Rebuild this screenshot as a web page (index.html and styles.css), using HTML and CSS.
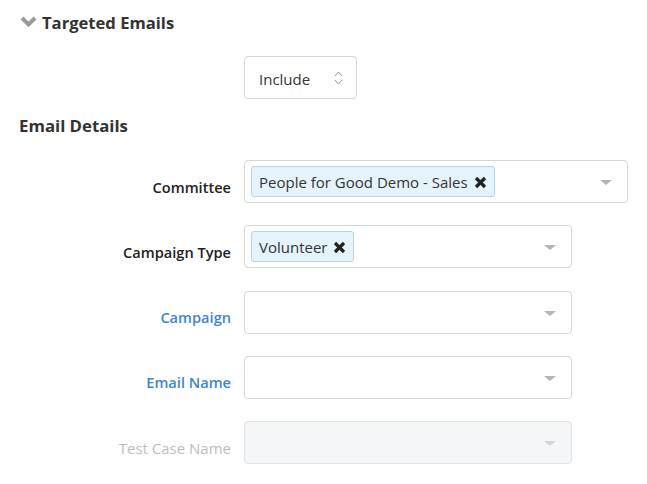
FILE: index.html
```html
<!DOCTYPE html>
<html lang="en">
<head>
    <meta charset="UTF-8">
    <title>Targeted Emails</title>
    <link rel="stylesheet" href="styles.css">
</head>
<body>
    <div class="section-title">
        <svg class="chevron" width="17" height="12" viewBox="0 0 17 12"><path d="M2 2 L8.5 8.5 L15 2" fill="none" stroke="#9a9a9a" stroke-width="4"/></svg>
        <span>Targeted Emails</span>
    </div>

    <div class="include-row">
        <div class="include-select">
            <span>Include</span>
            <svg width="9" height="16" viewBox="0 0 9 16"><path d="M1 6 L4.5 2 L8 6 M1 10 L4.5 14 L8 10" fill="none" stroke="#999" stroke-width="1"/></svg>
        </div>
    </div>

    <h2 class="group-title">Email Details</h2>

    <div class="form-row">
        <label>Committee</label>
        <div class="select wide">
            <span class="tag">People for Good Demo - Sales <svg class="remove" width="13" height="13" viewBox="0 0 13 13"><path d="M2 2 L11 11 M11 2 L2 11" stroke="#222" stroke-width="3.2"/></svg></span>
            <span class="caret"></span>
        </div>
    </div>
    <div class="form-row">
        <label>Campaign Type</label>
        <div class="select">
            <span class="tag">Volunteer <svg class="remove" width="13" height="13" viewBox="0 0 13 13"><path d="M2 2 L11 11 M11 2 L2 11" stroke="#222" stroke-width="3.2"/></svg></span>
            <span class="caret"></span>
        </div>
    </div>
    <div class="form-row">
        <label class="link">Campaign</label>
        <div class="select"><span class="caret"></span></div>
    </div>
    <div class="form-row">
        <label class="link">Email Name</label>
        <div class="select"><span class="caret"></span></div>
    </div>
    <div class="form-row disabled">
        <label>Test Case Name</label>
        <div class="select"><span class="caret"></span></div>
    </div>
</body>
</html>
```

FILE: styles.css
```css
body {
    font-family: "Open Sans", "Noto Sans", sans-serif;
    margin: 0;
    padding: 10px 19px;
    background: #fff;
    color: #333;
    font-size: 14px;
}
.section-title {
    display: flex;
    align-items: center;
    gap: 5px;
    font-size: 16.6px;
    font-weight: 700;
    color: #333;
    height: 24px;
}
.chevron {
    margin-left: 1px;
}
.include-row {
    margin: 22px 0 0 225px;
}
.include-select {
    display: flex;
    align-items: center;
    justify-content: space-between;
    width: 113px;
    height: 43px;
    box-sizing: border-box;
    padding: 2px 13px 0 14px;
    border: 1px solid #d3d6da;
    border-radius: 4px;
    font-size: 15px;
    color: #333;
}
.include-select svg {
    margin-top: -2px;
}
.group-title {
    font-size: 16.8px;
    font-weight: 700;
    margin: 15px 0 0;
    height: 24px;
    line-height: 24px;
}
.form-row {
    display: flex;
    align-items: center;
    margin-top: 22px;
}
.form-row + .form-row {
    margin-top: 22.3px;
}
.form-row label {
    width: 212px;
    text-align: right;
    padding-right: 13px;
    padding-top: 10px;
    font-size: 14.6px;
    font-weight: 600;
    color: #222;
}
.form-row label.link {
    color: #3d85cf;
}
.select {
    position: relative;
    display: flex;
    align-items: flex-start;
    width: 328px;
    height: 43px;
    box-sizing: border-box;
    padding: 5px 6px 0;
    border: 1px solid #d3d6da;
    border-radius: 4px;
    background: #fff;
}
.select.wide {
    width: 384px;
}
.tag {
    display: inline-flex;
    align-items: center;
    height: 31px;
    box-sizing: border-box;
    padding: 0 7px 0 7px;
    background: #e5f3fd;
    border: 1px solid #b9d3e6;
    border-radius: 3px;
    font-size: 15px;
    color: #333;
}
.remove {
    margin-left: 6px;
    margin-top: 2px;
}
.caret {
    position: absolute;
    right: 15px;
    top: 19px;
    width: 0;
    height: 0;
    border-left: 6px solid transparent;
    border-right: 6px solid transparent;
    border-top: 5px solid #b5b5b5;
}
.disabled label {
    color: #bdbdbd;
    font-weight: 400;
    font-size: 15px;
}
.disabled .select {
    background: #f5f6f7;
    border-color: #e1e3e5;
}
.disabled .caret {
    border-top-color: #d5d5d5;
}
```
